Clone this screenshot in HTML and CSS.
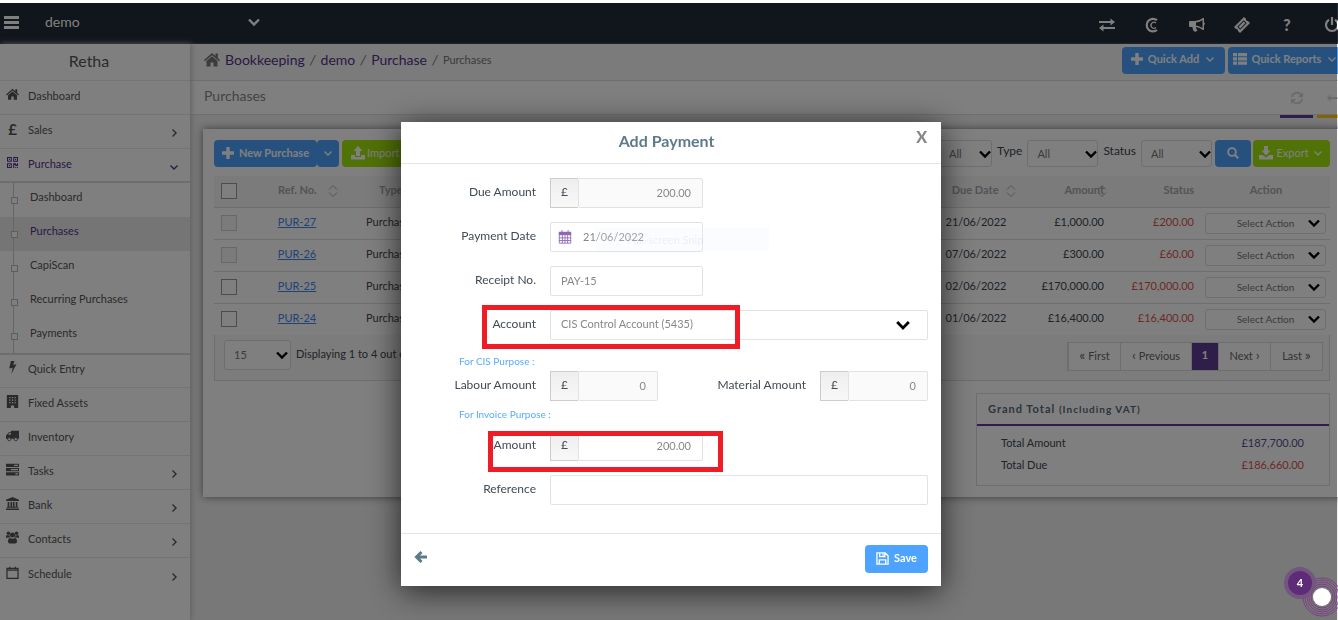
FILE: index.html
```html
<!DOCTYPE html>
<html lang="en">
<head>
<meta charset="utf-8">
<title>Purchases</title>
<link rel="stylesheet" href="styles.css">
</head>
<body>
<svg class="sprite" aria-hidden="true">
  <symbol id="down" viewBox="0 0 12 12"><path d="M1 3.500l5 5 5-5" fill="none" stroke="currentColor" stroke-width="2.400"/></symbol>
  <symbol id="thin-down" viewBox="0 0 12 12"><path d="M2.500 4.500L6 8l3.500-3.500" fill="none" stroke="currentColor" stroke-width="1.400"/></symbol>
  <symbol id="thin-right" viewBox="0 0 12 12"><path d="M4.500 2.500L8 6 4.500 9.500" fill="none" stroke="currentColor" stroke-width="1.400"/></symbol>
  <symbol id="sort" viewBox="0 0 10 14"><path d="M1 5.500L5 1.500l4 4M1 8.500l4 4 4-4" fill="none" stroke="currentColor" stroke-width="1"/></symbol>
  <symbol id="home" viewBox="0 0 16 16"><path fill="currentColor" d="M8 1L0 8l1 1.200L8 3.200l7 6L16 8l-2.200-2V1.500h-2.300V4zM8 4.300L2.500 9v5.500h4V10.500h3v4h4V9z"/></symbol>
  <symbol id="qr" viewBox="0 0 16 16"><path fill="currentColor" fill-rule="evenodd" d="M0 0h7v7H0zm1.500 1.500v4h4v-4zM2.700 2.700h1.600v1.600H2.700zM9 0h7v7H9zm1.500 1.500v4h4v-4zM11.700 2.700h1.600v1.600h-1.600zM0 9h7v7H0zm1.500 1.500v4h4v-4zM2.700 11.700h1.600v1.600H2.700zM9 9h4v2h1.500V9H16v4h-4v-1.500h-1.500V16H9zm3 5.500h1.500V16H12zm2.500 0H16V16h-1.500z"/></symbol>
  <symbol id="bolt" viewBox="0 0 16 16"><path fill="currentColor" d="M6 0h4.500L8.800 4.800l4.200-1L6.500 16l1.700-7.800L4 9.200z"/></symbol>
  <symbol id="building" viewBox="0 0 16 16"><path fill="currentColor" fill-rule="evenodd" d="M1 0h14v16h-5v-3H6v3H1zM4 2.500V4h1.500V2.500zm3.200 0V4h1.600V2.500zm3.300 0V4H12V2.500zM4 5.500V7h1.500V5.500zm3.200 0V7h1.600V5.500zm3.300 0V7H12V5.500zM4 8.500V10h1.500V8.500zm3.200 0V10h1.600V8.500zm3.300 0V10H12V8.500z"/></symbol>
  <symbol id="truck" viewBox="0 0 16 16"><path fill="currentColor" d="M6 2h10v10H6V4H3.500L1 7v5h5V7H2.300l1.900-2.200H6z"/><path d="M1 7h5v5H0V8z" fill="currentColor"/><circle cx="4" cy="12.500" r="2" fill="#fff" stroke="currentColor"/><circle cx="12" cy="12.500" r="2" fill="#fff" stroke="currentColor"/></symbol>
  <symbol id="tasks" viewBox="0 0 16 16"><path fill="currentColor" fill-rule="evenodd" d="M0 1h16v4H0zm10 1.300v1.400h4.700V2.300zM0 6.200h16v4H0zm6 1.300v1.400h8.700V7.500zM0 11.400h16v4H0zm11.500 1.300v1.400h3.200v-1.400z"/></symbol>
  <symbol id="bank" viewBox="0 0 16 16"><path fill="currentColor" d="M8 0l8 3.500V5H0V3.500zM2 6h2v6h1.500V6h2v6h1V6h2v6H12V6h2v6h1v1.200H1V12h1zM0 14h16v2H0z"/></symbol>
  <symbol id="users" viewBox="0 0 16 16"><g fill="currentColor"><circle cx="3" cy="2.700" r="2.200"/><circle cx="13" cy="2.700" r="2.200"/><circle cx="8" cy="5" r="3.100"/><path d="M0 9V7q0-2 1.500-2Q3 6 4.300 5q0 2 1.200 3H2Q0 9 0 9zM16 9V7q0-2-1.500-2-1.500 1-2.800 0 0 2-1.200 3H14q2 1 2 1zM2.500 13q0-4.500 2.500-4.500 3 2 6 0 2.500 0 2.500 4.500 0 2.500-2 2.500h-7q-2 0-2-2.500z"/></g></symbol>
  <symbol id="cal" viewBox="0 0 16 16"><path d="M1.200 3h13.600v12.200H1.200zM1.200 5h13.600M4.500 1v3M11.500 1v3" fill="none" stroke="currentColor" stroke-width="1.500"/></symbol>
  <symbol id="calgrid" viewBox="0 0 16 16"><path fill="currentColor" d="M1 2h14v4H1z"/><path d="M1.500 3h13v12h-13zM1 9h14M1 12h14M5 6v9M8 6v9M11 6v9M4.500 0v4M11.500 0v4" fill="none" stroke="currentColor"/></symbol>
  <symbol id="exchange" viewBox="0 0 16 16"><path fill="currentColor" d="M0 4h11.500V1.500L16 5l-4.500 3.500V6H0zM16 10H4.500V7.500L0 11l4.500 3.500V12H16z"/></symbol>
  <symbol id="cc" viewBox="0 0 16 16"><path d="M13 3.200A6.300 6.300 0 1 0 13 13" fill="none" stroke="currentColor" stroke-width="2.200"/><path d="M12 6a3 3 0 1 0 0 4.500" fill="none" stroke="currentColor" stroke-width="1.300"/></symbol>
  <symbol id="horn" viewBox="0 0 16 16"><path fill="currentColor" fill-rule="evenodd" d="M0 5q0-1 1-1h5q5-.500 8-3h1v4.500q1 .200 1 1.200t-1 1.300V13h-1q-3.500-2.700-7-3 0 2 1.500 3.500Q7 15.500 4.500 14 3.500 12 3.500 10H1Q0 10 0 9zm7 .500v3q4 .500 6.500 2.500V3Q11 5 7 5.500z"/></symbol>
  <symbol id="ticket" viewBox="0 0 16 16"><path fill="currentColor" fill-rule="evenodd" d="M0 10L10 0l2 1.800q-.500 2 2 2.200L16 6 6 16l-2-2q.300-2-2-2zm3.200-.200l3 3 6.500-6.500-3-3zM4.500 9.800l5.200-5.200 1.700 1.700-5.200 5.200z"/></symbol>
  <symbol id="power" viewBox="0 0 16 16"><path d="M5 2.800a6 6 0 1 0 6 0M8 0v8" fill="none" stroke="currentColor" stroke-width="2.200"/></symbol>
  <symbol id="plus" viewBox="0 0 12 12"><path fill="currentColor" d="M4.300 0h3.400v4.300H12v3.400H7.700V12H4.300V7.700H0V4.300h4.300z"/></symbol>
  <symbol id="list" viewBox="0 0 14 12"><path fill="currentColor" d="M0 0h4v3.200H0zm5 0h9v3.200H5zM0 4.300h4v3.200H0zm5 0h9v3.200H5zM0 8.600h4v3.200H0zm5 0h9v3.200H5z"/></symbol>
  <symbol id="upload" viewBox="0 0 14 14"><path fill="currentColor" d="M7 0l4.500 5H9v5H5V5H2.500zM0 9h4v2h6V9h4v4.500H0z"/></symbol>
  <symbol id="download" viewBox="0 0 14 14"><path fill="currentColor" d="M5 0h4v4.500h2.500L7 9.500l-4.500-5H5zM0 9h3.500L7 11.500 10.500 9H14v4.500H0z"/></symbol>
  <symbol id="search" viewBox="0 0 12 12"><path d="M8 8l3.200 3.200" stroke="currentColor" stroke-width="2.200"/><circle cx="5" cy="5" r="3.900" fill="none" stroke="currentColor" stroke-width="1.900"/></symbol>
  <symbol id="refresh" viewBox="0 0 16 16"><path d="M2 7a6 6 0 0 1 10.500-3M14 9a6 6 0 0 1-10.500 3" fill="none" stroke="currentColor" stroke-width="2"/><path d="M15 1v6H9zM1 15V9h6z" fill="currentColor"/></symbol>
  <symbol id="left" viewBox="0 0 14 12"><path d="M7.500 1L2.500 6l5 5M2.500 6H13" fill="none" stroke="currentColor" stroke-width="3"/></symbol>
  <symbol id="long-left" viewBox="0 0 16 12"><path fill="currentColor" d="M0 6l4-4v3h12v2H4v3z"/></symbol>
  <symbol id="save" viewBox="0 0 14 14"><path d="M1 1h9l3 3v9H1zM3.500 13V8.500h7V13M4 1v4h5.500V1M7.500 2v2" fill="none" stroke="currentColor" stroke-width="1.400"/></symbol>
</svg>

<div class="page">
  <header class="topbar">
    <button class="burger" aria-label="Menu"><i></i><i></i><i></i></button>
    <button class="company">demo <svg class="i12"><use href="#down"/></svg></button>
    <nav class="tools" aria-label="Tools">
      <a href="#" aria-label="Switch"><svg class="i16"><use href="#exchange"/></svg></a>
      <a href="#" aria-label="Capium"><svg class="i16"><use href="#cc"/></svg></a>
      <a href="#" aria-label="News"><svg class="i16"><use href="#horn"/></svg></a>
      <a href="#" aria-label="Tickets"><svg class="i16"><use href="#ticket"/></svg></a>
      <a href="#" class="help">?</a>
      <a href="#" aria-label="Log out"><svg class="i16"><use href="#power"/></svg></a>
    </nav>
  </header>
  <div class="body">
    <nav class="side" aria-label="Main">
      <div class="brand">Retha</div>
      <a class="item" href="#"><svg class="i13"><use href="#home"/></svg><span>Dashboard</span></a>
      <a class="item" href="#"><b class="pound">£</b><span>Sales</span><svg class="i12"><use href="#thin-right"/></svg></a>
      <a class="item open" href="#"><svg class="i11"><use href="#qr"/></svg><span>Purchase</span><svg class="i12"><use href="#thin-down"/></svg></a>
      <div class="sub">
        <a href="#">Dashboard</a>
        <a href="#" class="current">Purchases</a>
        <a href="#">CapiScan</a>
        <a href="#">Recurring Purchases</a>
        <a href="#">Payments</a>
      </div>
      <a class="item" href="#"><svg class="i13"><use href="#bolt"/></svg><span>Quick Entry</span></a>
      <a class="item" href="#"><svg class="i13"><use href="#building"/></svg><span>Fixed Assets</span></a>
      <a class="item" href="#"><svg class="i13"><use href="#truck"/></svg><span>Inventory</span></a>
      <a class="item" href="#"><svg class="i13"><use href="#tasks"/></svg><span>Tasks</span><svg class="i12"><use href="#thin-right"/></svg></a>
      <a class="item" href="#"><svg class="i13"><use href="#bank"/></svg><span>Bank</span><svg class="i12"><use href="#thin-right"/></svg></a>
      <a class="item" href="#"><svg class="i13"><use href="#users"/></svg><span>Contacts</span><svg class="i12"><use href="#thin-right"/></svg></a>
      <a class="item" href="#"><svg class="i13"><use href="#cal"/></svg><span>Schedule</span><svg class="i12"><use href="#thin-right"/></svg></a>
    </nav>
    <main class="main">
      <div class="crumbs">
        <svg class="i16"><use href="#home"/></svg>
        <a href="#">Bookkeeping</a><i>/</i><a href="#">demo</a><i>/</i><a href="#">Purchase</a><i>/</i><small>Purchases</small>
        <div class="quick">
          <button class="btn blue"><svg class="i12"><use href="#plus"/></svg>Quick Add<svg class="i12"><use href="#thin-down"/></svg></button>
          <button class="btn blue"><svg class="i14"><use href="#list"/></svg>Quick Reports<svg class="i12"><use href="#thin-down"/></svg></button>
        </div>
      </div>
      <div class="title">
        <h1>Purchases</h1>
        <div class="tabs">
          <button class="tab" aria-label="Refresh"><svg class="i14"><use href="#refresh"/></svg></button>
          <button class="tab yellow" aria-label="Back"><svg class="i14"><use href="#long-left"/></svg></button>
        </div>
      </div>
      <section class="panel">
        <div class="toolbar">
          <div class="split"><button class="btn blue"><svg class="i12"><use href="#plus"/></svg>New Purchase</button><button class="btn blue more" aria-label="More"><svg class="i12"><use href="#thin-down"/></svg></button></div>
          <button class="btn green"><svg class="i14"><use href="#upload"/></svg>Import</button>
          <div class="filters">
            <span class="pick narrow"><select aria-label="Contact"><option>All</option></select><svg class="i12"><use href="#down"/></svg></span>
            <label for="ft">Type</label>
            <span class="pick"><select id="ft"><option>All</option></select><svg class="i12"><use href="#down"/></svg></span>
            <label for="fs">Status</label>
            <span class="pick"><select id="fs"><option>All</option></select><svg class="i12"><use href="#down"/></svg></span>
            <button class="btn blue find" aria-label="Search"><svg class="i12"><use href="#search"/></svg></button>
            <button class="btn green export"><svg class="i14"><use href="#download"/></svg>Export<svg class="i12"><use href="#thin-down"/></svg></button>
          </div>
        </div>
        <table class="list">
          <colgroup><col class="c-check"><col class="c-ref"><col><col class="c-due"><col class="c-num"><col class="c-num"><col class="c-act"></colgroup>
          <thead><tr><th><input type="checkbox" aria-label="Select all"></th><th class="ref">Ref. No. <svg class="sort"><use href="#sort"/></svg></th><th class="type">Type</th><th class="due">Due Date <svg class="sort"><use href="#sort"/></svg></th><th class="num">Amount<svg class="sort over"><use href="#sort"/></svg></th><th class="num">Status</th><th class="mid">Action</th></tr></thead>
          <tbody>
            <tr><td><input type="checkbox" disabled aria-label="PUR-27"></td><td class="mid"><a href="#">PUR-27</a></td><td class="type">Purchase</td><td class="due">21/06/2022</td><td class="num">£1,000.00</td><td class="num red">£200.00</td><td><span class="pick act"><select aria-label="Action"><option>Select Action</option></select><svg class="i12"><use href="#down"/></svg></span></td></tr>
            <tr><td><input type="checkbox" disabled aria-label="PUR-26"></td><td class="mid"><a href="#">PUR-26</a></td><td class="type">Purchase</td><td class="due">07/06/2022</td><td class="num">£300.00</td><td class="num red">£60.00</td><td><span class="pick act"><select aria-label="Action"><option>Select Action</option></select><svg class="i12"><use href="#down"/></svg></span></td></tr>
            <tr><td><input type="checkbox" aria-label="PUR-25"></td><td class="mid"><a href="#">PUR-25</a></td><td class="type">Purchase</td><td class="due">02/06/2022</td><td class="num">£170,000.00</td><td class="num red">£170,000.00</td><td><span class="pick act"><select aria-label="Action"><option>Select Action</option></select><svg class="i12"><use href="#down"/></svg></span></td></tr>
            <tr><td><input type="checkbox" aria-label="PUR-24"></td><td class="mid"><a href="#">PUR-24</a></td><td class="type">Purchase</td><td class="due">01/06/2022</td><td class="num">£16,400.00</td><td class="num red">£16,400.00</td><td><span class="pick act"><select aria-label="Action"><option>Select Action</option></select><svg class="i12"><use href="#down"/></svg></span></td></tr>
          </tbody>
        </table>
        <div class="pager">
          <span class="pick size"><select aria-label="Page size"><option>15</option></select><svg class="i12"><use href="#down"/></svg></span>
          <span>Displaying 1 to 4 out of 4</span>
          <div class="pages"><button><b>«</b> First</button><button><b>‹</b> Previous</button><button class="on">1</button><button>Next <b>›</b></button><button>Last <b>»</b></button></div>
        </div>
        <div class="total">
          <h2>Grand Total <small>(Including VAT)</small></h2>
          <dl><div><dt>Total Amount</dt><dd class="violet">£187,700.00</dd></div><div><dt>Total Due</dt><dd class="red">£186,660.00</dd></div></dl>
        </div>
      </section>
    </main>
  </div>
</div>

<div class="backdrop">
  <form class="modal" role="dialog" aria-labelledby="mt">
    <div class="m-head"><h2 id="mt">Add Payment</h2><button type="button" class="close" aria-label="Close">X</button></div>
    <div class="m-body">
      <label for="due">Due Amount</label>
      <div class="money mid-w"><span>£</span><input id="due" value="200.00" readonly></div>
      <label for="date">Payment Date</label>
      <div class="date mid-w"><svg class="i14"><use href="#calgrid"/></svg><input id="date" value="21/06/2022"></div>
      <label for="rec">Receipt No.</label>
      <input class="mid-w" id="rec" value="PAY-15">
      <label for="acc">Account</label>
      <span class="pick wide"><select id="acc"><option>CIS Control Account (5435)</option></select><svg class="i14"><use href="#down"/></svg></span>
      <p>For CIS Purpose :</p>
      <label for="lab">Labour Amount</label>
      <div class="pair"><div class="money small-w"><span>£</span><input id="lab" value="0" readonly></div><label for="mat">Material Amount</label><div class="money small-w"><span>£</span><input id="mat" value="0" readonly></div></div>
      <p>For Invoice Purpose :</p>
      <label for="amt">Amount</label>
      <div class="money mid-w"><span>£</span><input id="amt" value="200.00"></div>
      <label for="ref" class="gap">Reference</label>
      <input class="gap" id="ref">
      <div class="mark mark-account"></div>
      <div class="mark mark-amount"></div>
      <div class="snip">Full-screen Snip</div>
    </div>
    <div class="m-foot"><button type="button" class="back" aria-label="Back"><svg class="i14"><use href="#left"/></svg></button><button type="button" class="btn blue save"><svg class="i13"><use href="#save"/></svg>Save</button></div>
  </form>
</div>

<svg class="chat" viewBox="0 0 58 58" role="img" aria-label="Help, 4 notifications">
  <g fill="none" stroke="#7b3f86"><circle cx="42" cy="35" r="11"/><circle cx="42" cy="35" r="13"/><circle cx="42" cy="35" r="15"/><circle cx="42" cy="35" r="17"/><circle cx="42" cy="35" r="19"/></g>
  <circle cx="20" cy="21" r="16" fill="#73557f"/><circle cx="20" cy="21" r="12" fill="#5e2b78"/>
  <circle cx="42" cy="35" r="9" fill="#fff"/>
  <text x="20" y="25" text-anchor="middle">4</text>
</svg>
</body>
</html>
```
FILE: styles.css
```css
* { box-sizing: border-box; }
html { overflow: hidden; }
body { margin: 0; height: 100vh; overflow: hidden; background: #fff; color: #40464e; font: 12px/16px Lato, "Noto Sans", sans-serif; }
button, input, select { font: inherit; color: inherit; margin: 0; }
button { border: 0; background: none; padding: 0; }
a { color: inherit; text-decoration: none; }
h1, h2, p, dl, dd { margin: 0; font-weight: 400; }
svg { flex: none; display: block; }
.sprite { position: absolute; width: 0; height: 0; }
.i11 { width: 11px; height: 11px; }
.i12 { width: 12px; height: 12px; }
.i13 { width: 13px; height: 13px; }
.i14 { width: 14px; height: 14px; }
.i16 { width: 16px; height: 16px; }

.page { display: flex; flex-direction: column; min-height: 100vh; margin-right: -12px; padding-top: 3px; }
.topbar { height: 41px; background: #222a38; color: #fff; display: flex; align-items: center; padding: 0 10px 0 4px; }
.burger { display: grid; gap: 2px; width: 15px; padding-bottom: 2px; }
.burger i { height: 3px; background: #fff; }
.company { display: flex; align-items: center; justify-content: space-between; width: 215px; margin-left: 26px; font-size: 14px; padding-bottom: 4px; }
.tools { margin-left: auto; display: flex; gap: 29px; padding-top: 2px; }
.help { width: 16px; font-size: 16px; font-weight: 900; text-align: center; }
.body { flex: 1; display: flex; }

.side { width: 190px; background: #fff; box-shadow: 1px 0 6px #bbb; z-index: 1; color: #555; }
.brand { height: 37px; padding: 8px 12px 0 0; border-bottom: 1px solid #e9e9e9; font-size: 16px; line-height: 17px; text-align: center; }
.item { display: flex; height: 34px; align-items: center; border-bottom: 1px solid #e9e9e9; padding: 0 10px 3px 6px; }
.item:last-child { border: 0; }
.item > :first-child { width: 13px; margin-right: 9px; }
.item > svg:first-child { margin-bottom: 3px; }
.item span { flex: 1; font-size: 11px; }
.item span + svg { margin-top: 6px; }
.pound { font-size: 15px; text-align: center; padding-bottom: 3px; }
.open { color: #55338a; }
.sub { border-top: 2px solid #ddd; border-bottom: 2px solid #ddd; margin: -2px 0 -1px; }
.sub a { display: flex; align-items: center; height: 34px; padding: 0 0 6px 28px; font-size: 11px; background: linear-gradient(#ccc, #ccc) 13px 0 / 1px 100% no-repeat; }
.sub a::before { content: ""; width: 5px; height: 5px; margin: 6px 13px 0 -17px; border: 1px solid #bbb; background: #fff; margin-right: 12px; }
.sub .current { background-color: #ebebeb; color: #55338a; }

.main { flex: 1; min-width: 0; background: #f1f1f1; }
.crumbs { height: 37px; display: flex; align-items: center; gap: 5px; padding: 0 7px 4px 14px; background: #f6f6f6; border-bottom: 1px solid #ddd; box-shadow: 0 1px 3px #ccc; font-size: 14px; color: #777; }
.crumbs > a { color: #55338a; }
.crumbs small { font-size: 11px; }
.quick { margin-left: auto; display: flex; gap: 3px; }
.title { height: 34px; display: flex; justify-content: space-between; background: #fff; border-bottom: 1px solid #ddd; padding-left: 14px; }
.title h1 { font-size: 14px; line-height: 30px; color: #888; }
.tabs { display: flex; gap: 4px; height: 37px; }
.tab { width: 33px; border-bottom: 3px solid #613d94; color: #d4d4d4; display: grid; place-items: center; }
.yellow { border-color: #fecb0a; }

.btn { display: flex; justify-content: center; align-items: center; gap: 5px; height: 27px; padding: 0 9px 2px; border-radius: 4px; color: #fff; font-weight: 700; font-size: 11px; white-space: nowrap; }
.blue { background: #4da3ff; }
.green { background: #a2e40c; font-weight: 400; }
.quick .btn { width: 103px; }
.quick .btn + .btn { width: 115px; }
.panel { margin: 14px 7px 0 13px; padding: 11px 13px 11px 11px; background: #fff; box-shadow: 0 0 8px #777; }
.toolbar { display: flex; gap: 3px; height: 27px; margin-bottom: 9px; }
.split { display: flex; }
.split .btn:first-child { width: 103px; }
.more { width: 22px; }
.toolbar > .green { width: 76px; justify-content: flex-start; gap: 2px; }
.filters { margin-left: auto; display: flex; gap: 3px; align-items: center; }
.filters label { padding: 0 2px 5px; }
.find { width: 36px; }
.filters .export { width: 77px; margin-left: -1px; padding: 0 4px 2px; gap: 3px; }
.pick { display: inline-grid; width: 71px; height: 27px; align-items: center; }
.pick > * { grid-area: 1 / 1; }
.narrow { width: 53px; }
.pick svg { justify-self: end; margin-right: 1px; color: #000; pointer-events: none; }
.pick select { appearance: none; width: 100%; height: 100%; border: 1px solid #ddd; border-radius: 3px; background: #fff; padding: 0 9px; color: #777; font-size: 11px; }

.list { width: 100%; table-layout: fixed; border-collapse: collapse; }
.c-check { width: 30px; }
.c-ref { width: 106px; }
.c-due { width: 92px; }
.c-num { width: 90px; }
.c-act { width: 128px; }
.list tr { height: 32px; border-bottom: 1px solid #ddd; }
.list thead tr { height: 31px; }
.list tbody tr:last-child { border: 0; }
.list td, .list th { padding: 0 0 3px; text-align: left; font-size: 11px; }
.list th { background: #f6f6f6; color: #a4a8ad; font-weight: 700; }
.list td:first-child, .list th:first-child { padding: 0 0 0 7px; }
.list .mid { text-align: center; }
.list .ref { padding-left: 34px; white-space: nowrap; }
.list .type { padding-left: 16px; }
.list th.type { padding-left: 29px; }
.list .due { text-align: center; white-space: nowrap; }
.list th.due { padding-left: 16px; }
.list .num { text-align: right; padding-right: 8px; }
.list a { color: #3d87ec; text-decoration: underline; }
.list input { appearance: none; display: block; width: 16px; height: 16px; border: 1px solid #999; background: #fff; }
.list input:disabled { border-color: #d0d0d0; background: #f6f6f6; }
.list td:last-child { padding: 0 0 0 3px; }
.sort { display: inline-block; width: 10px; height: 14px; margin-left: 9px; vertical-align: -4px; }
.due .sort { margin-left: 5px; }
.sort.over { margin: 0 -3px 0 -7px; }
.red { color: #d9534f; }
.violet { color: #5b4a9a; }
.act { display: grid; width: 121px; height: 21px; }
.act select { text-align: center; font-size: 10px; }
.act svg { margin-right: 6px; }
.pager { display: flex; gap: 5px; height: 46px; padding: 5px 6px 11px 9px; border: 1px solid #ddd; border-top: 0; background: #f8f8f8; line-height: 28px; font-size: 11px; }
.size { width: 67px; height: 29px; }
.size svg { margin-right: 3px; }
.pages { display: flex; margin: 2px 0 0 auto; height: 29px; border: 1px solid #ddd; background: #fff; color: #666; line-height: 20px; }
.pages button { width: 52px; border-left: 1px solid #ddd; padding-bottom: 3px; }
.pages b { font-size: 14px; font-weight: 400; }
.pages button:nth-child(2) { width: 71px; }
.pages .on { width: 27px; background: #613d94; color: #fff; font-weight: 700; }
.total { width: 354px; margin: 12px 0 0 auto; border: 1px solid #ddd; padding-bottom: 9px; }
.total h2 { height: 32px; border-bottom: 2px solid #613d94; padding-left: 11px; color: #576b78; font-size: 11px; line-height: 29px; font-weight: 700; letter-spacing: 1px; }
.total small { font-size: 10px; }
.total dl { padding: 6px 25px 0 24px; font-size: 11px; line-height: 22px; }
.total dl div { display: flex; justify-content: space-between; }

.backdrop { position: fixed; inset: 3px 1px 0 0; z-index: 2; background: rgba(0, 0, 0, .5); display: flex; justify-content: center; align-items: flex-start; padding: 119px 0 0 5px; }
.modal { width: 540px; background: #fff; box-shadow: 0 5px 30px rgba(0, 0, 0, .7); font-size: 12px; color: #3f4b57; }
.m-head { display: flex; height: 42px; align-items: center; border-bottom: 1px solid #e5e5e5; padding: 0 14px 3px 16px; color: #5c7b88; }
.m-head h2 { flex: 1; text-align: center; font-size: 16px; font-weight: 700; }
.close { color: #888; font-size: 16px; font-weight: 900; padding-bottom: 8px; }
.m-body { position: relative; display: grid; grid-template-columns: 135px 1fr; column-gap: 14px; padding: 14px 13px 28px 0; }
.m-body > label { text-align: right; line-height: 28px; }
.m-body > :nth-child(-n+6) { margin-bottom: 14px; }
.m-body .gap { margin-top: 14px; }
.m-body p { grid-column: 1 / -1; height: 31px; padding: 14px 0 0 58px; font-size: 10px; line-height: 15px; color: #5aa9ff; }
.m-body p ~ p { height: 30px; padding-top: 6px; }
.m-body input, .wide select { width: 100%; min-width: 0; height: 30px; border: 1px solid #e2e2e2; border-radius: 2px; background: #fff; padding: 0 11px 2px 10px; color: #888; font-size: 11px; }
.m-body .mid-w { width: 153px; }
.small-w { width: 108px; }
.money { display: flex; }
.money span { width: 28px; height: 30px; border: 1px solid #ccc; border-right: 0; background: linear-gradient(#eee, #f8f8f8); text-align: center; line-height: 26px; flex: none; }
.money input { text-align: right; flex: 1; }
.money input:read-only { background: #fafafa; }
.date { display: grid; align-items: center; color: #8e69b6; }
.date > * { grid-area: 1 / 1; }
.date svg { margin-left: 8px; z-index: 1; }
.m-body .date input { padding-left: 32px; }
.wide { width: 100%; height: 30px; }
.m-body .wide select { height: 30px; }
.wide svg { margin-right: 18px; }
.pair { display: flex; justify-content: space-between; line-height: 28px; }
.pair label { margin-left: auto; margin-right: 14px; }
.mark { position: absolute; border: 5px solid #ee1c25; pointer-events: none; }
.mark-account { left: 81px; top: 141px; width: 258px; height: 44px; }
.mark-amount { left: 87px; top: 267px; width: 235px; height: 41px; }
.snip { position: absolute; left: 194px; top: 64px; width: 174px; height: 23px; background: rgba(235, 242, 255, .25); color: rgba(120, 120, 120, .1); padding-left: 32px; line-height: 23px; font-size: 11px; pointer-events: none; }
.m-foot { display: flex; justify-content: space-between; align-items: center; height: 53px; padding: 0 13px 2px; border-top: 1px solid #e5e5e5; color: #5c7b88; }
.back { padding-bottom: 4px; }
.save { width: 63px; height: 28px; }
.chat { position: fixed; right: 0; bottom: 0; z-index: 3; width: 58px; height: 58px; }
.chat text { fill: #fff; font-size: 11px; font-weight: 700; }
```
